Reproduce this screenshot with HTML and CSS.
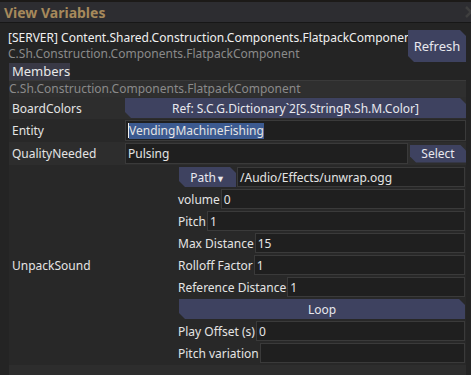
FILE: index.html
```html
<!DOCTYPE html>
<html lang="en">
  <head>
    <meta charset="UTF-8" />
    <title>View Variables</title>
    <link rel="stylesheet" href="styles.css">
  </head>
  <body>
    <div class="window">
      <div class="titlebar">
        <span class="title">View Variables</span>
        <svg class="close" width="14" height="14" viewBox="0 0 14 14">
          <path d="M2 2 L12 12 M12 2 L2 12" stroke="#3f3f3f" stroke-width="2.5" fill="none" />
        </svg>
      </div>

      <div class="header">
        <div class="names">
          <div class="name-full">[SERVER] Content.Shared.Construction.Components.FlatpackComponent</div>
          <div class="name-short">C.Sh.Construction.Components.FlatpackComponent</div>
        </div>
        <button class="btn refresh">Refresh</button>
      </div>

      <div class="tabs">
        <span class="tab">Members</span>
      </div>

      <div class="panel">
        <div class="group-head">C.Sh.Construction.Components.FlatpackComponent</div>

        <div class="prop odd">
          <span class="label">BoardColors</span>
          <button class="btn wide">Ref: S.C.G.Dictionary`2[S.StringR.Sh.M.Color]</button>
        </div>

        <div class="prop">
          <span class="label">Entity</span>
          <div class="field"><span class="caret"></span><span class="selected">VendingMachineFishing</span></div>
        </div>

        <div class="prop odd">
          <span class="label">QualityNeeded</span>
          <div class="field-row">
            <div class="field">Pulsing</div>
            <button class="btn select">Select</button>
          </div>
        </div>

        <div class="prop sound">
          <span class="label">UnpackSound</span>
          <div class="sublist">
            <div class="sub">
              <button class="btn path">Path<span class="arrow">▼</span></button>
              <div class="field">/Audio/Effects/unwrap.ogg</div>
            </div>
            <div class="sub"><span class="sub-label">volume</span><div class="field">0</div></div>
            <div class="sub"><span class="sub-label">Pitch</span><div class="field">1</div></div>
            <div class="sub"><span class="sub-label">Max Distance</span><div class="field">15</div></div>
            <div class="sub"><span class="sub-label">Rolloff Factor</span><div class="field">1</div></div>
            <div class="sub"><span class="sub-label">Reference Distance</span><div class="field">1</div></div>
            <div class="sub"><button class="btn loop">Loop</button></div>
            <div class="sub"><span class="sub-label">Play Offset (s)</span><div class="field">0</div></div>
            <div class="sub"><span class="sub-label">Pitch variation</span><div class="field"></div></div>
          </div>
        </div>

        <div class="prop odd tail"></div>
      </div>
    </div>
  </body>
</html>
```

FILE: styles.css
```css
body {
  margin: 0;
  background: #1d1b19;
  font-family: 'Noto Sans', sans-serif;
  font-size: 12px;
  color: #e4e4e4;
}
.window {
  width: 471px;
  height: 375px;
  background: #242424;
  overflow: hidden;
}
.titlebar {
  height: 20px;
  border-top: 2px solid #1c1a18;
  border-bottom: 1px solid #171717;
  background: #2d2d31;
  display: flex;
  align-items: center;
  padding-left: 4px;
  overflow: hidden;
}
.title {
  font-weight: bold;
  font-size: 14px;
  color: #a6895b;
}
.close {
  margin-left: auto;
  margin-right: -7px;
}
.header {
  display: flex;
  padding: 7px 5px 0 8px;
}
.names {
  flex: 1;
  min-width: 0;
  overflow: hidden;
  white-space: nowrap;
  line-height: 16px;
}
.name-full {
  color: #f0f0f0;
}
.name-short {
  color: #8a8a8a;
}
.btn {
  appearance: none;
  -webkit-appearance: none;
  border-radius: 0;
  font-family: inherit;
  font-size: 12px;
  color: #e8e8ee;
  background: #3e4260;
  border: none;
  padding: 0;
  clip-path: polygon(0 0, calc(100% - 6px) 0, 100% 6px, 100% 100%, 6px 100%, 0 calc(100% - 6px));
}
.refresh {
  width: 58px;
  height: 32px;
  font-size: 13px;
}
.tabs {
  margin: 1px 0 0 9px;
  height: 17px;
}
.tab {
  display: inline-block;
  width: 61px;
  height: 17px;
  line-height: 17px;
  padding-left: 3px;
  box-sizing: border-box;
  background: #393946;
  color: #e8e8e8;
  font-size: 13px;
}
.panel {
  margin: 0 5px 0 9px;
}
.group-head {
  height: 16px;
  line-height: 16px;
  border-top: 1px solid #3a3a3a;
  background: #2f2f2f;
  color: #8a8a8a;
  white-space: nowrap;
  overflow: hidden;
}
.prop {
  display: grid;
  grid-template-columns: 116px 1fr;
  align-items: center;
  padding: 1px 0;
  background: #282828;
}
.prop.odd {
  background: #2d2d2d;
}
.label {
  padding-left: 3px;
}
.wide {
  height: 20px;
}
.field {
  height: 21px;
  line-height: 19px;
  box-sizing: border-box;
  border: 1px solid #3a3a3a;
  background: #1f1f1f;
  padding-left: 2px;
  white-space: nowrap;
  overflow: hidden;
  display: flex;
  align-items: center;
  flex: 1;
  min-width: 0;
}
.caret {
  width: 1px;
  height: 15px;
  background: #f0f0f0;
}
.selected {
  background: #3c5a90;
  line-height: 16px;
}
.field-row {
  display: flex;
  align-items: center;
  gap: 2px;
}
.select {
  width: 56px;
  height: 18px;
}
.sound {
  padding: 2px 0 2px;
}
.sublist {
  margin: 0 1px 0 53px;
  display: flex;
  flex-direction: column;
  gap: 2px;
}
.sub {
  display: flex;
  align-items: center;
  height: 20px;
}
.sub .field {
  height: 20px;
}
.sub-label {
  margin-right: 1px;
  white-space: nowrap;
}
.path {
  width: 57px;
  height: 20px;
  margin-right: 1px;
  margin-left: 1px;
}
.arrow {
  font-size: 9px;
}
.loop {
  flex: 1;
  height: 20px;
  margin-left: 1px;
}
.tail {
  height: 12px;
}
```
